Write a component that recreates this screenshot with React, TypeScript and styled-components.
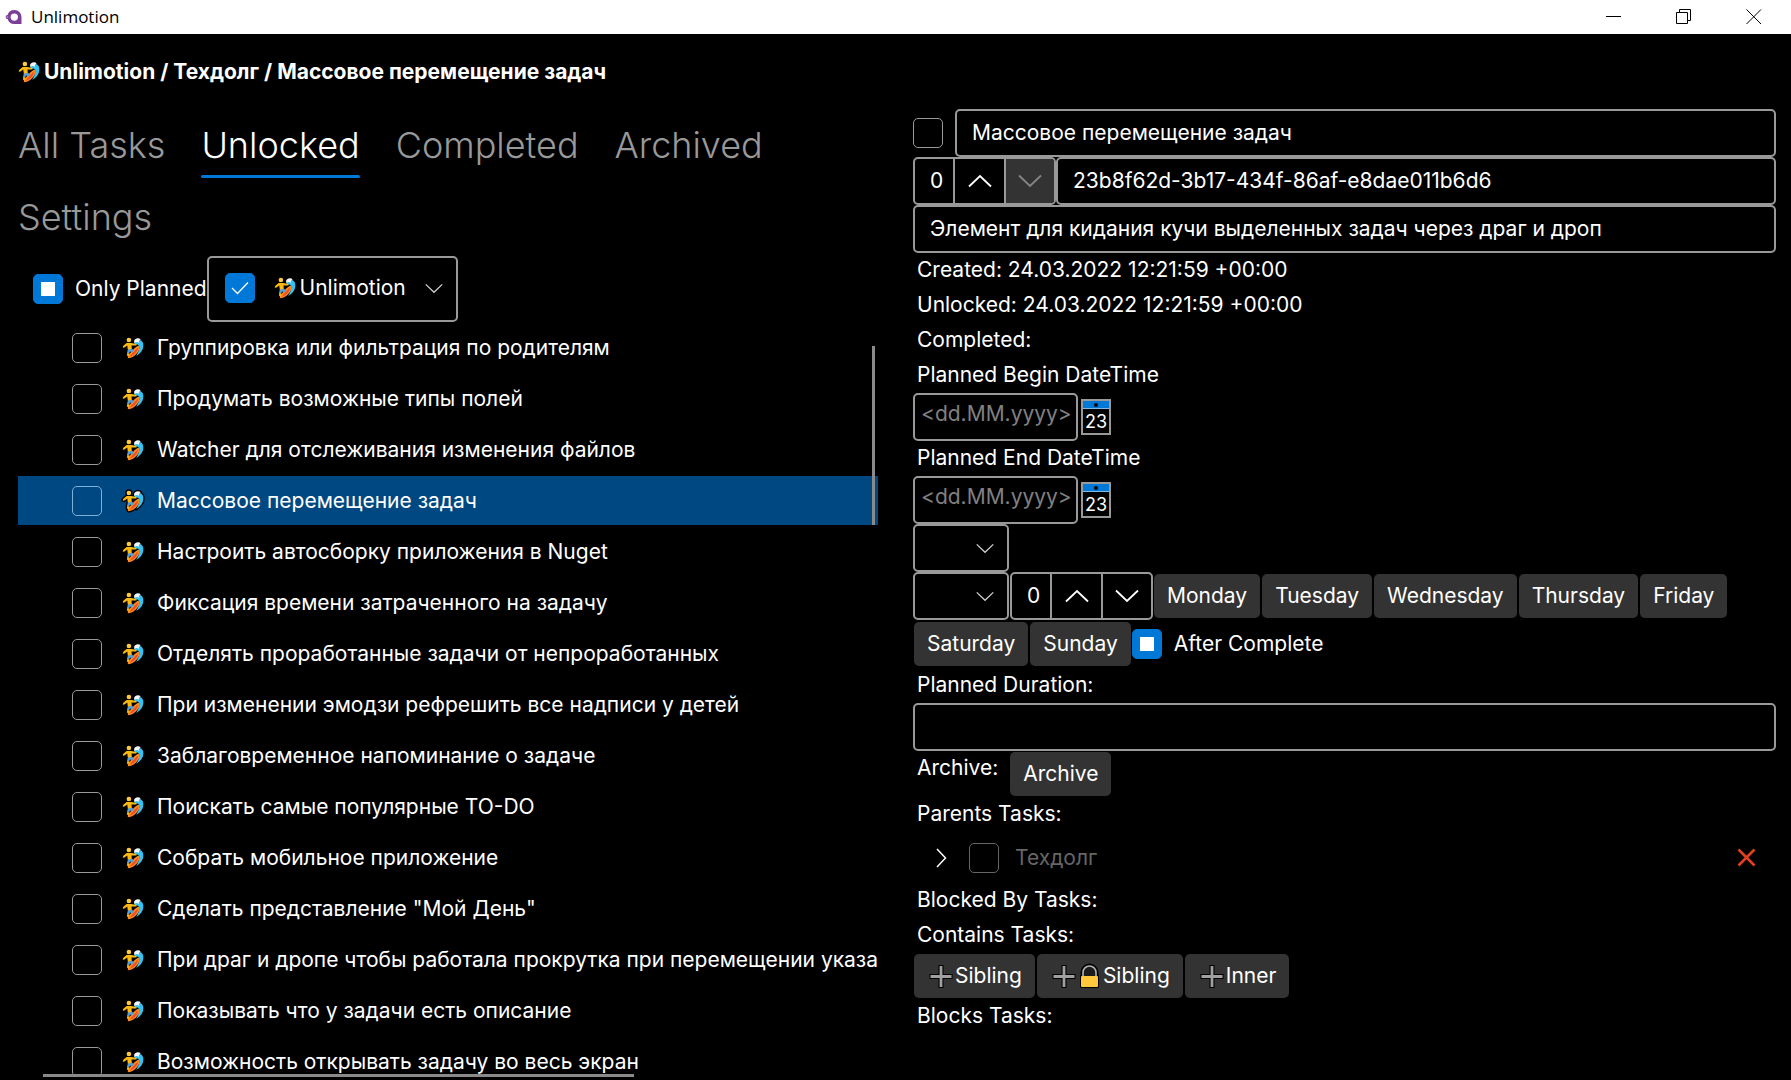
import React, { useEffect, useRef, useState } from "react";
import styled, { createGlobalStyle, css } from "styled-components";

const GlobalStyle = createGlobalStyle`
  *, *::before, *::after { box-sizing: border-box; }
  body {
    margin: 0;
    background: #000;
    color: #fff;
    font-family: Inter, "Noto Sans", sans-serif;
    font-size: 21px;
    line-height: 26px;
  }
  button, input, select { font: inherit; color: inherit; margin: 0; }
`;

/* ---------- window frame ---------- */

const Window = styled.div`
  display: flex;
  flex-direction: column;
  height: 100vh;
  overflow: hidden;
`;

const TitleBar = styled.header`
  display: flex;
  align-items: center;
  height: 34px;
  flex: none;
  padding: 0 2px 0 5px;
  background: #fff;
  color: #000;
`;

const AppTitle = styled.span`
  flex: 1;
  padding-left: 8px;
  font-family: "Open Sans", sans-serif;
  font-size: 17px;
  line-height: 34px;
`;

const CaptionButton = styled.button`
  display: flex;
  align-items: center;
  justify-content: center;
  width: 70px;
  height: 34px;
  padding: 0;
  border: 0;
  background: transparent;
`;

const Breadcrumb = styled.h1`
  display: flex;
  align-items: center;
  flex: none;
  height: 75px;
  margin: 0;
  padding: 0 18px;
  font-size: 21px;
  font-weight: 700;
`;

const BreadcrumbEmoji = styled.span`
  display: flex;
  padding-right: 4px;
`;

const Columns = styled.main`
  display: grid;
  grid-template-columns: minmax(0, 1fr) minmax(0, 1fr);
  gap: 32px;
  flex: 1;
  min-height: 0;
  padding: 0 15px 3px 18px;
`;

/* ---------- left pane ---------- */

const LeftPane = styled.section`
  display: flex;
  flex-direction: column;
  min-height: 0;
`;

const Tabs = styled.nav`
  display: flex;
  flex-wrap: wrap;
  flex: none;
  gap: 0 36px;
`;

const Tab = styled.button<{ $active?: boolean }>`
  height: 72px;
  padding: 6px 0 3px;
  border: 0;
  background: transparent;
  color: ${(p) => (p.$active ? "#fff" : "#999")};
  font-size: 36px;
  font-weight: 300;
  font-optical-sizing: none;
  line-height: 60px;

  &::after {
    content: "";
    display: block;
    height: 3px;
    border-radius: 2px;
    background: ${(p) => (p.$active ? "#0078d7" : "transparent")};
  }
`;

const FilterRow = styled.div`
  display: flex;
  align-items: center;
  flex: none;
  height: 69px;
  padding: 3px 0 0 15px;
`;

const FilterLabel = styled.label`
  display: flex;
  align-items: center;
  gap: 12px;
`;

const FilterBox = styled.div`
  display: flex;
  align-items: center;
  height: 66px;
  padding: 0 13px 2px 16px;
  border: 2px solid #999;
  border-radius: 5px;
`;

const FilterEmoji = styled.span`
  display: flex;
  padding: 0 4px 0 19px;
`;

const ListFrame = styled.div`
  position: relative;
  flex: 1;
  min-height: 0;
  margin-right: 3px;
  overflow: hidden;
`;

const TaskList = styled.ul`
  display: flex;
  flex-direction: column;
  gap: 2px;
  margin: 0;
  padding: 1px 0 0;
  list-style: none;
`;

const TaskRow = styled.li<{ $selected?: boolean }>`
  background: ${(p) => (p.$selected ? "#004881" : "transparent")};

  label {
    display: flex;
    align-items: center;
    height: 49px;
    padding-left: 54px;
    white-space: nowrap;
  }
  input { border-color: ${(p) => (p.$selected ? "#7fb0d8" : "#999")}; }
`;

const TaskEmoji = styled.span`
  display: flex;
  padding: 0 13px 0 20px;
`;

const VerticalThumb = styled.div`
  position: absolute;
  top: 24px;
  right: 3px;
  width: 3px;
  height: 179px;
  background: #8a8a8a;
`;

const HorizontalThumb = styled.div`
  position: absolute;
  bottom: 0;
  left: 25px;
  width: 591px;
  height: 3px;
  background: #8a8a8a;
`;

/* ---------- shared controls ---------- */

const CheckCell = styled.span`
  display: inline-grid;
  flex: none;
  width: 30px;
  height: 30px;

  > * { grid-area: 1 / 1; }
  > svg { pointer-events: none; }
`;

const CheckInput = styled.input`
  appearance: none;
  width: 30px;
  height: 30px;
  border: 1px solid #999;
  border-radius: 5px;
  background: transparent;

  &:checked, &:indeterminate {
    border-color: #0078d7;
    background: #0078d7;
  }
  &:disabled { border-color: #666; }
`;

const SelectCell = styled.span<{ $wide?: boolean }>`
  display: inline-grid;
  align-items: center;
  justify-items: end;
  flex: none;

  > * { grid-area: 1 / 1; }
  > svg {
    pointer-events: none;
    color: #ccc;
    margin-right: ${(p) => (p.$wide ? "0" : "16px")};
  }
`;

const FilterSelect = styled.select`
  appearance: none;
  width: 143px;
  height: 40px;
  padding: 0;
  border: 0;
  background: transparent;
`;

const SmallSelect = styled.select`
  appearance: none;
  width: 96px;
  height: 48px;
  margin-right: 1px;
  border: 2px solid #999;
  border-radius: 5px;
  background: transparent;
`;

const TextBox = styled.input<{ $date?: boolean }>`
  height: 48px;
  min-width: 0;
  border: 2px solid #999;
  border-radius: 5px;
  background: transparent;
  outline: none;
  ${(p) =>
    p.$date
      ? css`
          flex: none;
          width: 165px;
          padding: 0 0 8px 6px;
        `
      : css`
          flex: 1;
          padding: 0 15px 1px;
        `}

  &::placeholder { color: #808080; opacity: 1; }
`;

const SpinnerBox = styled.div`
  display: flex;
  flex: none;
  height: 48px;
  border: 2px solid #999;
  border-radius: 5px;
  overflow: hidden;

  input {
    width: 38px;
    padding: 0 0 0 15px;
    border: 0;
    background: transparent;
    outline: none;
  }
`;

const SpinButton = styled.button`
  display: flex;
  align-items: center;
  justify-content: center;
  width: 51px;
  padding: 0;
  border: 0;
  border-left: 2px solid #999;
  background: transparent;

  &:last-child { width: 50px; }
  &:disabled { background: #333; color: #858585; }
`;

const PushButton = styled.button`
  display: flex;
  align-items: center;
  flex: none;
  height: 44px;
  margin: 2px 1px;
  padding: 0 13px;
  border: 0;
  border-radius: 5px;
  background: #333;
`;

const ToggleLabel = styled.label`
  display: flex;
  align-items: center;
  gap: 12px;
`;

/* ---------- right pane ---------- */

const Details = styled.section`
  display: flex;
  flex-direction: column;
  min-height: 0;
`;

const Line = styled.div<{ $gap?: number }>`
  display: flex;
  flex-wrap: wrap;
  align-items: center;
  gap: 0 ${(p) => p.$gap || 0}px;
`;

const captionStyle = css`
  display: block;
  height: 35px;
  padding: 0 4px;
  line-height: 33px;
`;

const Caption = styled.div`
  ${captionStyle}
`;

const FieldCaption = styled.label`
  ${captionStyle}
`;

const ArchiveLine = styled.div`
  display: flex;
  align-items: flex-start;
  gap: 7px;
  height: 46px;

  button { margin-top: 1px; }
`;

const ActionLine = styled.div`
  display: flex;
  height: 46px;

  button { margin-top: 1px; }
`;

const CalendarButton = styled.button`
  display: flex;
  padding: 0;
  border: 0;
  background: transparent;
`;

const CalendarFace = styled.span`
  display: block;
  width: 30px;
  height: 36px;
  border: 2px solid #999;
  font-size: 18px;
  line-height: 26px;
  text-align: center;
`;

const CalendarTop = styled.span`
  display: flex;
  align-items: center;
  justify-content: center;
  height: 8px;
  background: #0078d7;
  border-bottom: 1px solid #80b8e8;

  &::after {
    content: "";
    width: 4px;
    height: 4px;
    border-radius: 50%;
    background: #000;
  }
`;

const ParentRow = styled.div`
  display: flex;
  align-items: center;
  height: 51px;
  padding: 0 20px 0 23px;
`;

const ParentLabel = styled.label`
  display: flex;
  align-items: center;
  flex: 1;
  gap: 16px;
  padding-left: 22px;
  color: #666;
`;

const IconButton = styled.button`
  display: flex;
  padding: 0;
  border: 0;
  background: transparent;
`;

/* ---------- drawings ---------- */

const surferShapes = (
  <>
    <path d="M37 17C40 5 58 4 63 17C67 32 60 46 42 57C50 44 54 32 50 25C47 20 42 22 37 24Z" fill="#35c1f1" />
    <path d="M36 10C38 2 50 0 56 6C51 9 50 12 50 17C45 12 41 15 36 17Z" fill="#f3f8fb" />
    <path d="M50 26C58 36 42 60 20 64C13 63 18 54 25 47C34 38 40 28 50 26Z" fill="#ff8a1f" />
    <path d="M47 32C49 40 38 54 25 59C23 57 29 50 34 45C40 40 43 34 47 32Z" fill="#ee4d2c" />
    <circle cx="20" cy="8" r="7" fill="#ffc83d" />
    <path d="M1 31L3 26L13 17L27 17L43 20L43 25L28 25L29 38L17 39L15 25L5 32Z" fill="#fdb913" />
    <path d="M17 37L29 35L36 39L30 46L24 43L20 49L14 48Z" fill="#5a9ed0" />
    <path d="M15 48L14 56L20 57L22 49Z" fill="#fdb913" />
  </>
);

const Surfer = () => (
  <svg width="22" height="22" viewBox="-1 -1 67 67" aria-hidden="true" overflow="visible">
    <g stroke="#000" strokeWidth="8" strokeLinejoin="round">{surferShapes}</g>
    {surferShapes}
  </svg>
);

const Logo = () => (
  <svg width="18" height="18" viewBox="0 0 18 18" aria-hidden="true">
    <path
      fillRule="evenodd"
      fill="#7b3f98"
      d="M9.300 2A7 7 0 0 1 16.500 9V16H9.300A7 7 0 0 1 2.600 11A2 2 0 0 1 2.600 7A7 7 0 0 1 9.300 2ZM9.300 5.400A3.700 3.700 0 1 0 9.300 12.800A3.700 3.700 0 1 0 9.300 5.400Z"
    />
    <circle cx="2.400" cy="9" r="1" fill="#a77cc0" />
  </svg>
);

const Arrow = ({ up, small }: { up?: boolean; small?: boolean }) => {
  const w = small ? 18 : 24;
  return (
    <svg width={w} height={w / 2 + 2} viewBox="0 0 24 14" fill="none" stroke="currentColor" strokeWidth={small ? 1.8 : 1.8}>
      <path d={up ? "M1 12.500L12 2L23 12.500" : "M1 1.500L12 12L23 1.500"} />
    </svg>
  );
};

const PlusGlyph = () => (
  <svg width="28" height="26" viewBox="0 0 28 26" aria-hidden="true">
    <path d="M14 2V25M2.500 13.500H25.500" stroke="#000" strokeWidth="5" />
    <path d="M14 3V24M3.500 13.500H24.500" stroke="#a0a0a0" strokeWidth="2.800" />
  </svg>
);

const LockGlyph = () => (
  <svg width="25" height="26" viewBox="0 0 25 26" aria-hidden="true">
    <path d="M5 13V9.500A6.500 6.500 0 0 1 18 9.500V13" fill="#000" stroke="#000" strokeWidth="5" />
    <rect x="2" y="12" width="19" height="13" rx="2" fill="#000" />
    <path d="M5 13V9.500A6.500 6.500 0 0 1 18 9.500V13" fill="#1c1c1c" stroke="#b4b4b4" strokeWidth="1.600" />
    <rect x="3" y="13" width="17" height="11" rx="1" fill="#ffc83d" />
  </svg>
);

/* ---------- composed controls ---------- */

type CheckProps = { mixed?: boolean; initial?: boolean; disabled?: boolean; label?: string };

function Check({ mixed, initial = false, disabled, label }: CheckProps) {
  const ref = useRef<HTMLInputElement>(null);
  const [on, setOn] = useState(initial);
  const [partial, setPartial] = useState(!!mixed);
  useEffect(() => {
    if (ref.current) ref.current.indeterminate = partial;
  }, [partial]);
  return (
    <CheckCell>
      <CheckInput
        ref={ref}
        type="checkbox"
        aria-label={label}
        checked={on}
        disabled={disabled}
        onChange={(e) => {
          setPartial(false);
          setOn(e.target.checked);
        }}
      />
      {partial && (
        <svg width="30" height="30" viewBox="0 0 30 30">
          <rect x="8" y="8" width="14" height="14" fill="#fff" />
        </svg>
      )}
      {!partial && on && (
        <svg width="30" height="30" viewBox="0 0 30 30" fill="none" stroke="#fff" strokeWidth="1.300">
          <path d="M7 15L12.500 20.500L23 9.500" />
        </svg>
      )}
    </CheckCell>
  );
}

function NumberSpinner({ label, atMinimum }: { label: string; atMinimum?: boolean }) {
  const [value, setValue] = useState(0);
  return (
    <SpinnerBox>
      <input aria-label={label} value={value} onChange={(e) => setValue(Number(e.target.value) || 0)} />
      <SpinButton aria-label="Increase" onClick={() => setValue(value + 1)}>
        <Arrow up />
      </SpinButton>
      <SpinButton aria-label="Decrease" disabled={atMinimum && value === 0} onClick={() => setValue(value - 1)}>
        <Arrow />
      </SpinButton>
    </SpinnerBox>
  );
}

function EmptySelect({ label }: { label: string }) {
  return (
    <SelectCell>
      <SmallSelect aria-label={label} />
      <Arrow small />
    </SelectCell>
  );
}

function DateField({ id, caption }: { id: string; caption: string }) {
  return (
    <>
      <FieldCaption htmlFor={id}>{caption}</FieldCaption>
      <Line $gap={3}>
        <TextBox $date id={id} placeholder="<dd.MM.yyyy>" />
        <CalendarButton aria-label={"Choose " + caption}>
          <CalendarFace>
            <CalendarTop />
            23
          </CalendarFace>
        </CalendarButton>
      </Line>
    </>
  );
}

const tabs = ["All Tasks", "Unlocked", "Completed", "Archived", "Settings"];

const tasks = [
  "Группировка или фильтрация по родителям",
  "Продумать возможные типы полей",
  "Watcher для отслеживания изменения файлов",
  "Массовое перемещение задач",
  "Настроить автосборку приложения в Nuget",
  "Фиксация времени затраченного на задачу",
  "Отделять проработанные задачи от непроработанных",
  "При изменении эмодзи рефрешить все надписи у детей",
  "Заблаговременное напоминание о задаче",
  "Поискать самые популярные TO-DO",
  "Собрать мобильное приложение",
  'Сделать представление "Мой День"',
  "При драг и дропе чтобы работала прокрутка при перемещении указа",
  "Показывать что у задачи есть описание",
  "Возможность открывать задачу во весь экран",
];

const days = ["Monday", "Tuesday", "Wednesday", "Thursday", "Friday", "Saturday", "Sunday"];

export default function App() {
  return (
    <>
      <GlobalStyle />
      <Window>
        <TitleBar>
          <Logo />
          <AppTitle>Unlimotion</AppTitle>
          <CaptionButton aria-label="Minimize">
            <svg width="16" height="16" viewBox="0 0 16 16" stroke="#000">
              <path d="M0 7.500H15" />
            </svg>
          </CaptionButton>
          <CaptionButton aria-label="Restore">
            <svg width="16" height="16" viewBox="0 0 16 16" stroke="#000" fill="none">
              <path d="M.5 3.500H11.500V14.500H.5ZM3.500 3.500V.5H14.500V11.500H11.500" />
            </svg>
          </CaptionButton>
          <CaptionButton aria-label="Close">
            <svg width="16" height="16" viewBox="0 0 16 16" stroke="#000" fill="none">
              <path d="M.5 .5L15 15M15 .5L.5 15" />
            </svg>
          </CaptionButton>
        </TitleBar>

        <Breadcrumb>
          <BreadcrumbEmoji>
            <Surfer />
          </BreadcrumbEmoji>
          Unlimotion / Техдолг / Массовое перемещение задач
        </Breadcrumb>

        <Columns>
          <LeftPane>
            <Tabs>
              {tabs.map((t) => (
                <Tab key={t} $active={t === "Unlocked"}>
                  {t}
                </Tab>
              ))}
            </Tabs>
            <FilterRow>
              <FilterLabel>
                <Check mixed />
                Only Planned
              </FilterLabel>
              <FilterBox>
                <Check initial label="Unlimotion" />
                <FilterEmoji>
                  <Surfer />
                </FilterEmoji>
                <SelectCell $wide>
                  <FilterSelect aria-label="Emoji filter">
                    <option>Unlimotion</option>
                  </FilterSelect>
                  <Arrow small />
                </SelectCell>
              </FilterBox>
            </FilterRow>
            <ListFrame>
              <TaskList>
                {tasks.map((t, i) => (
                  <TaskRow key={t} $selected={i === 3}>
                    <label>
                      <Check />
                      <TaskEmoji>
                        <Surfer />
                      </TaskEmoji>
                      {t}
                    </label>
                  </TaskRow>
                ))}
              </TaskList>
              <VerticalThumb />
              <HorizontalThumb />
            </ListFrame>
          </LeftPane>

          <Details>
            <Line $gap={12}>
              <Check label="Task completed" />
              <TextBox aria-label="Title" defaultValue="Массовое перемещение задач" />
            </Line>
            <Line>
              <NumberSpinner label="Importance" atMinimum />
              <TextBox aria-label="Task id" readOnly value="23b8f62d-3b17-434f-86af-e8dae011b6d6" />
            </Line>
            <Line>
              <TextBox
                aria-label="Description"
                defaultValue="Элемент для кидания кучи выделенных задач через драг и дроп"
              />
            </Line>
            <Caption>Created: 24.03.2022 12:21:59 +00:00</Caption>
            <Caption>Unlocked: 24.03.2022 12:21:59 +00:00</Caption>
            <Caption>Completed:</Caption>
            <DateField id="begin" caption="Planned Begin DateTime" />
            <DateField id="end" caption="Planned End DateTime" />
            <Line>
              <EmptySelect label="Duration preset" />
            </Line>
            <Line>
              <EmptySelect label="Repeat type" />
              <NumberSpinner label="Repeat period" />
              {days.map((d) => (
                <PushButton key={d}>{d}</PushButton>
              ))}
              <ToggleLabel>
                <Check mixed />
                After Complete
              </ToggleLabel>
            </Line>
            <FieldCaption htmlFor="duration">Planned Duration:</FieldCaption>
            <Line>
              <TextBox id="duration" />
            </Line>
            <ArchiveLine>
              <Caption>Archive:</Caption>
              <PushButton>Archive</PushButton>
            </ArchiveLine>
            <Caption>Parents Tasks:</Caption>
            <ParentRow>
              <IconButton aria-label="Expand">
                <svg width="11" height="20" viewBox="0 0 11 20" fill="none" stroke="#fff" strokeWidth="1.500">
                  <path d="M1 1L9.500 10L1 19" />
                </svg>
              </IconButton>
              <ParentLabel>
                <Check disabled />
                Техдолг
              </ParentLabel>
              <IconButton aria-label="Remove parent">
                <svg width="19" height="19" viewBox="0 0 19 19" stroke="#e2401f" strokeWidth="2.600">
                  <path d="M1.500 1.500L17.500 17.500M17.500 1.500L1.500 17.500" />
                </svg>
              </IconButton>
            </ParentRow>
            <Caption>Blocked By Tasks:</Caption>
            <Caption>Contains Tasks:</Caption>
            <ActionLine>
              <PushButton>
                <PlusGlyph />
                Sibling
              </PushButton>
              <PushButton>
                <PlusGlyph />
                <LockGlyph />
                Sibling
              </PushButton>
              <PushButton>
                <PlusGlyph />
                Inner
              </PushButton>
            </ActionLine>
            <Caption>Blocks Tasks:</Caption>
          </Details>
        </Columns>
      </Window>
    </>
  );
}
